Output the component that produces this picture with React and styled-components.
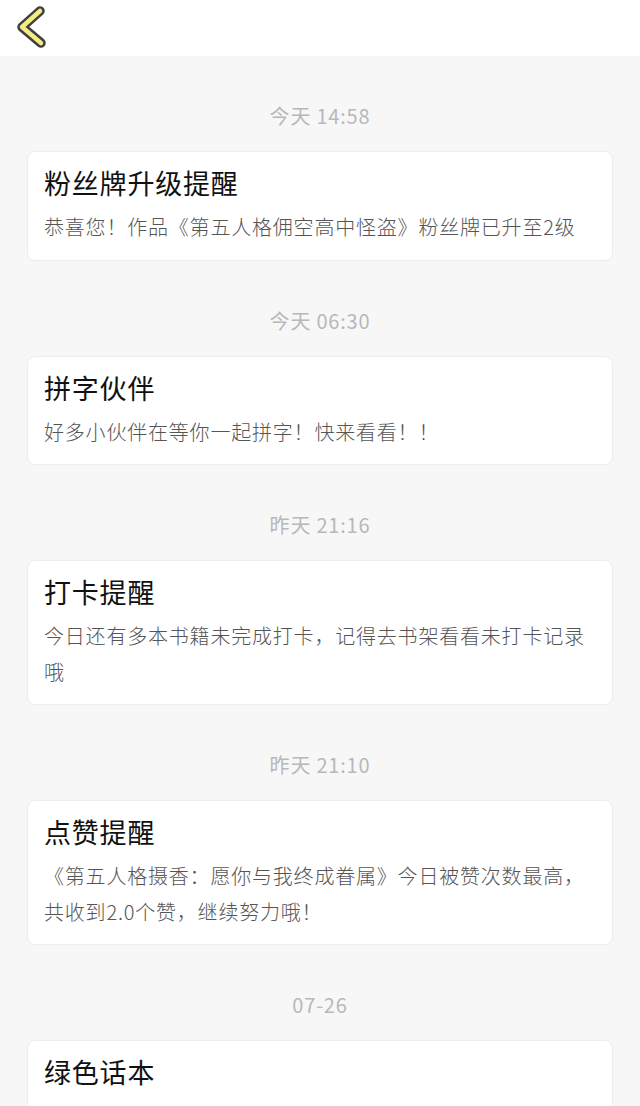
import React from "react";
import styled, { createGlobalStyle } from "styled-components";

const GlobalStyle = createGlobalStyle`
  html, body {
    margin: 0;
    padding: 0;
    background: #f8f7f8;
  }
  body {
    font-family: "Noto Sans CJK SC", "Noto Sans", sans-serif;
    -webkit-font-smoothing: antialiased;
  }
  * { box-sizing: border-box; }
`;

const Page = styled.div`
  width: 640px;
  height: 1106px;
  background: #f8f7f8;
  overflow: hidden;
`;

const Header = styled.header`
  height: 56px;
  background: #ffffff;
  display: flex;
  align-items: center;
  padding-left: 14px;
`;

const BackButton = styled.button`
  border: 0;
  background: transparent;
  padding: 0;
  width: 34px;
  height: 46px;
  display: flex;
  align-items: center;
  justify-content: center;
  cursor: pointer;
`;

const List = styled.main`
  display: flex;
  flex-direction: column;
  padding: 0 27px;
`;

const TimeLabel = styled.div`
  padding: 45px 0 20px;
  line-height: 30px;
  text-align: center;
  font-size: 20px;
  letter-spacing: 0.8px;
  color: #b8b8b8;
`;

const Card = styled.section`
  background: #ffffff;
  border: 1px solid #ededed;
  border-radius: 8px;
  padding: 13px 17px 15px 16px;
  min-height: ${(p) => (p.$open ? "140px" : "0")};
`;

const Title = styled.h2`
  margin: 0 0 8px;
  font-size: 27px;
  font-weight: 400;
  line-height: 36px;
  letter-spacing: 0.8px;
  color: #111111;
`;

const Body = styled.p`
  margin: 0;
  font-size: 20px;
  font-weight: 300;
  line-height: 35.5px;
  letter-spacing: 0.8px;
  color: #555555;
`;

const BackIcon = () => (
  <svg width="34" height="46" viewBox="0 0 34 46" aria-hidden="true">
    <polyline
      points="26,6 8,22 27,38"
      fill="none"
      stroke="#3f3f3f"
      strokeWidth="9.5"
      strokeLinecap="round"
      strokeLinejoin="round"
    />
    <polyline
      points="26,6 8,22 27,38"
      fill="none"
      stroke="#f4ec82"
      strokeWidth="4.5"
      strokeLinecap="round"
      strokeLinejoin="round"
    />
  </svg>
);

const messages = [
  {
    time: "今天 14:58",
    title: "粉丝牌升级提醒",
    body: "恭喜您！作品《第五人格佣空高中怪盗》粉丝牌已升至2级",
  },
  {
    time: "今天 06:30",
    title: "拼字伙伴",
    body: "好多小伙伴在等你一起拼字！快来看看！！",
  },
  {
    time: "昨天 21:16",
    title: "打卡提醒",
    body: "今日还有多本书籍未完成打卡，记得去书架看看未打卡记录哦",
  },
  {
    time: "昨天 21:10",
    title: "点赞提醒",
    body: "《第五人格摄香：愿你与我终成眷属》今日被赞次数最高，共收到2.0个赞，继续努力哦！",
  },
  {
    time: "07-26",
    title: "绿色话本",
  },
];

export default function App() {
  return (
    <Page>
      <GlobalStyle />
      <Header>
        <BackButton aria-label="返回">
          <BackIcon />
        </BackButton>
      </Header>
      <List>
        {messages.map((m) => (
          <React.Fragment key={m.time + m.title}>
            <TimeLabel>{m.time}</TimeLabel>
            <Card $open={!m.body}>
              <Title>{m.title}</Title>
              {m.body && <Body>{m.body}</Body>}
            </Card>
          </React.Fragment>
        ))}
      </List>
    </Page>
  );
}
